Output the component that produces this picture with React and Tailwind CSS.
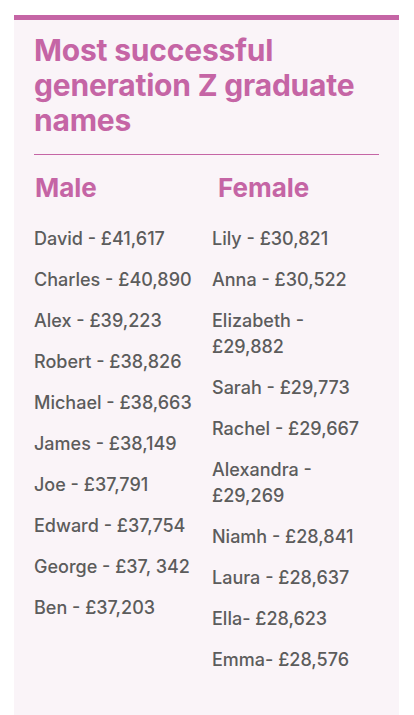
import React from "react";

const male = [
  "David - £41,617",
  "Charles - £40,890",
  "Alex - £39,223",
  "Robert - £38,826",
  "Michael - £38,663",
  "James - £38,149",
  "Joe - £37,791",
  "Edward - £37,754",
  "George - £37, 342",
  "Ben - £37,203",
];

const female = [
  "Lily - £30,821",
  "Anna - £30,522",
  "Elizabeth - £29,882",
  "Sarah - £29,773",
  "Rachel - £29,667",
  "Alexandra - £29,269",
  "Niamh - £28,841",
  "Laura - £28,637",
  "Ella- £28,623",
  "Emma- £28,576",
];

export default function App() {
  return (
    <div className="w-[414px] h-[715px] bg-white overflow-hidden" style={{ fontFamily: "Inter, 'Noto Sans', sans-serif" }}>
      <div className="ml-[14px] mt-[15px] w-[385px] h-[700px] bg-[#faf4f8] border-t-[5px] border-[#c565a5] pl-[20px] pr-[20px] pt-[13px]">
        <h1 className="text-[30px] leading-[35px] font-bold text-[#c565a5] tracking-[-0.2px]">
          Most successful generation Z graduate names
        </h1>
        <div className="mt-[16px] h-px bg-[#c565a5]" />
        <div className="flex mt-[18px]">
          <div className="w-[178px] flex flex-col">
            <div className="text-[26px] leading-[30px] font-bold text-[#c565a5] pl-px">Male</div>
            <div className="mt-[23px] flex flex-col gap-[15px]">
              {male.map((t) => (
                <div key={t} className="text-[18px] leading-[26px] font-medium text-[#5c5c5c]">{t}</div>
              ))}
            </div>
          </div>
          <div className="w-[160px] flex flex-col">
            <div className="text-[26px] leading-[30px] font-bold text-[#c565a5] pl-[6px]">Female</div>
            <div className="mt-[23px] flex flex-col gap-[15px]">
              {female.map((t) => (
                <div key={t} className="text-[18px] leading-[26px] font-medium text-[#5c5c5c]">{t}</div>
              ))}
            </div>
          </div>
        </div>
      </div>
    </div>
  );
}
